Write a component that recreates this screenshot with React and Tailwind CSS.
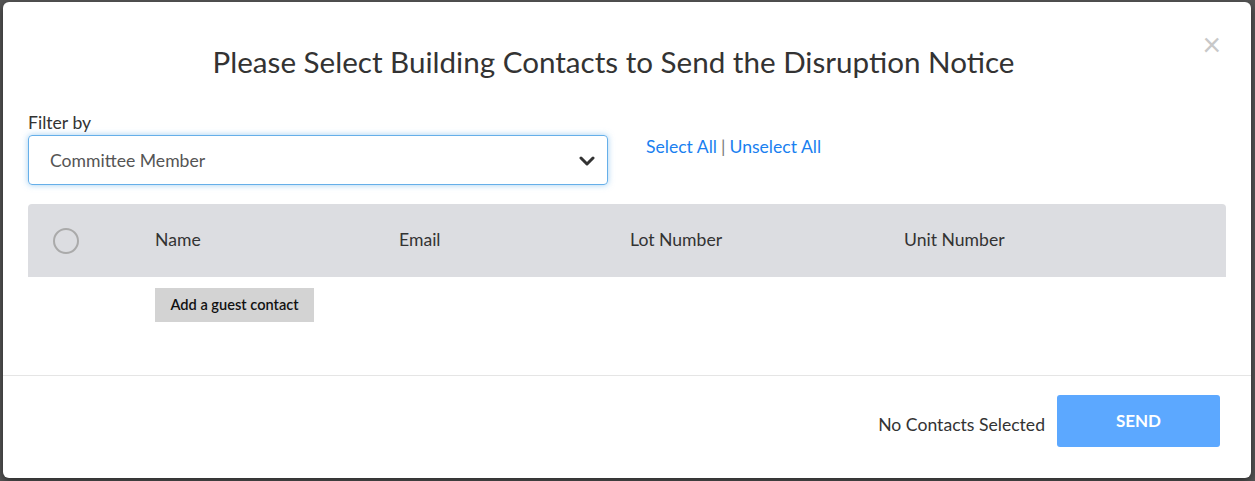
import React from "react";

export default function App() {
  const font = { fontFamily: "Lato, 'Open Sans', Arial, sans-serif" };
  return (
    <div className="w-[1255px] h-[481px] bg-[#555555] pt-[2px] pl-[3px] overflow-hidden" style={font}>
      <div className="w-[1248px] h-[476px] bg-white rounded-[6px] flex flex-col shadow-[0_3px_9px_rgba(0,0,0,0.5)]">
        <div className="relative pt-[40px] h-[97px]">
          <h1 className="text-center text-[29.6px] leading-[40px] text-[#333333] font-normal pr-[27px]">
            Please Select Building Contacts to Send the Disruption Notice
          </h1>
          <span className="absolute right-[30px] top-[24px] text-[32px] leading-[36px] text-[#c8c8c8]">×</span>
        </div>
        <div className="px-[25px]">
          <div className="flex items-start">
            <div className="w-[580px]">
              <div className="text-[17.6px] leading-[22px] text-[#333333] pt-[13px] pb-[1px]">Filter by</div>
              <div className="h-[50px] border border-[#66afe9] rounded-[4px] shadow-[0_0_6px_rgba(102,175,233,0.6)] flex items-center justify-between pl-[21px] pr-[12px]">
                <span className="text-[17.6px] text-[#555555] pt-[3px]">Committee Member</span>
                <svg width="16" height="12" viewBox="0 0 16 12" className="mt-[2px]">
                  <path d="M2 3 L8 9 L14 3" stroke="#333" strokeWidth="3" fill="none" strokeLinecap="round" strokeLinejoin="round" />
                </svg>
              </div>
            </div>
            <div className="ml-[38px] pt-[37px] text-[17.6px] leading-[22px]">
              <span className="text-[#1a7ff0]">Select All</span>
              <span className="text-[#777] px-[4px]">|</span>
              <span className="text-[#1a7ff0]">Unselect All</span>
            </div>
          </div>
          <div className="mt-[19px] h-[73px] bg-[#dcdde1] rounded-t-[4px] flex items-center text-[17.6px] text-[#333333]">
            <div className="w-[127px] flex pl-[25px]">
              <div className="w-[26px] h-[26px] rounded-full border-2 border-[#aaaaaa]"></div>
            </div>
            <div className="w-[244px]">Name</div>
            <div className="w-[231px]">Email</div>
            <div className="w-[274px]">Lot Number</div>
            <div>Unit Number</div>
          </div>
          <div className="pl-[127px] pt-[11px]">
            <button className="h-[34px] w-[159px] bg-[#d3d3d3] text-[14.6px] font-semibold text-[#111]">Add a guest contact</button>
          </div>
        </div>
        <div className="mt-[53px] border-t border-[#e5e5e5] flex justify-end items-center pt-[19px] pr-[31px]">
          <span className="text-[17.6px] text-[#333333] mr-[12px] mt-[8px]">No Contacts Selected</span>
          <button className="w-[163px] h-[52px] bg-[#5ca8ff] rounded-[3px] text-white font-bold text-[17px]">SEND</button>
        </div>
      </div>
    </div>
  );
}
